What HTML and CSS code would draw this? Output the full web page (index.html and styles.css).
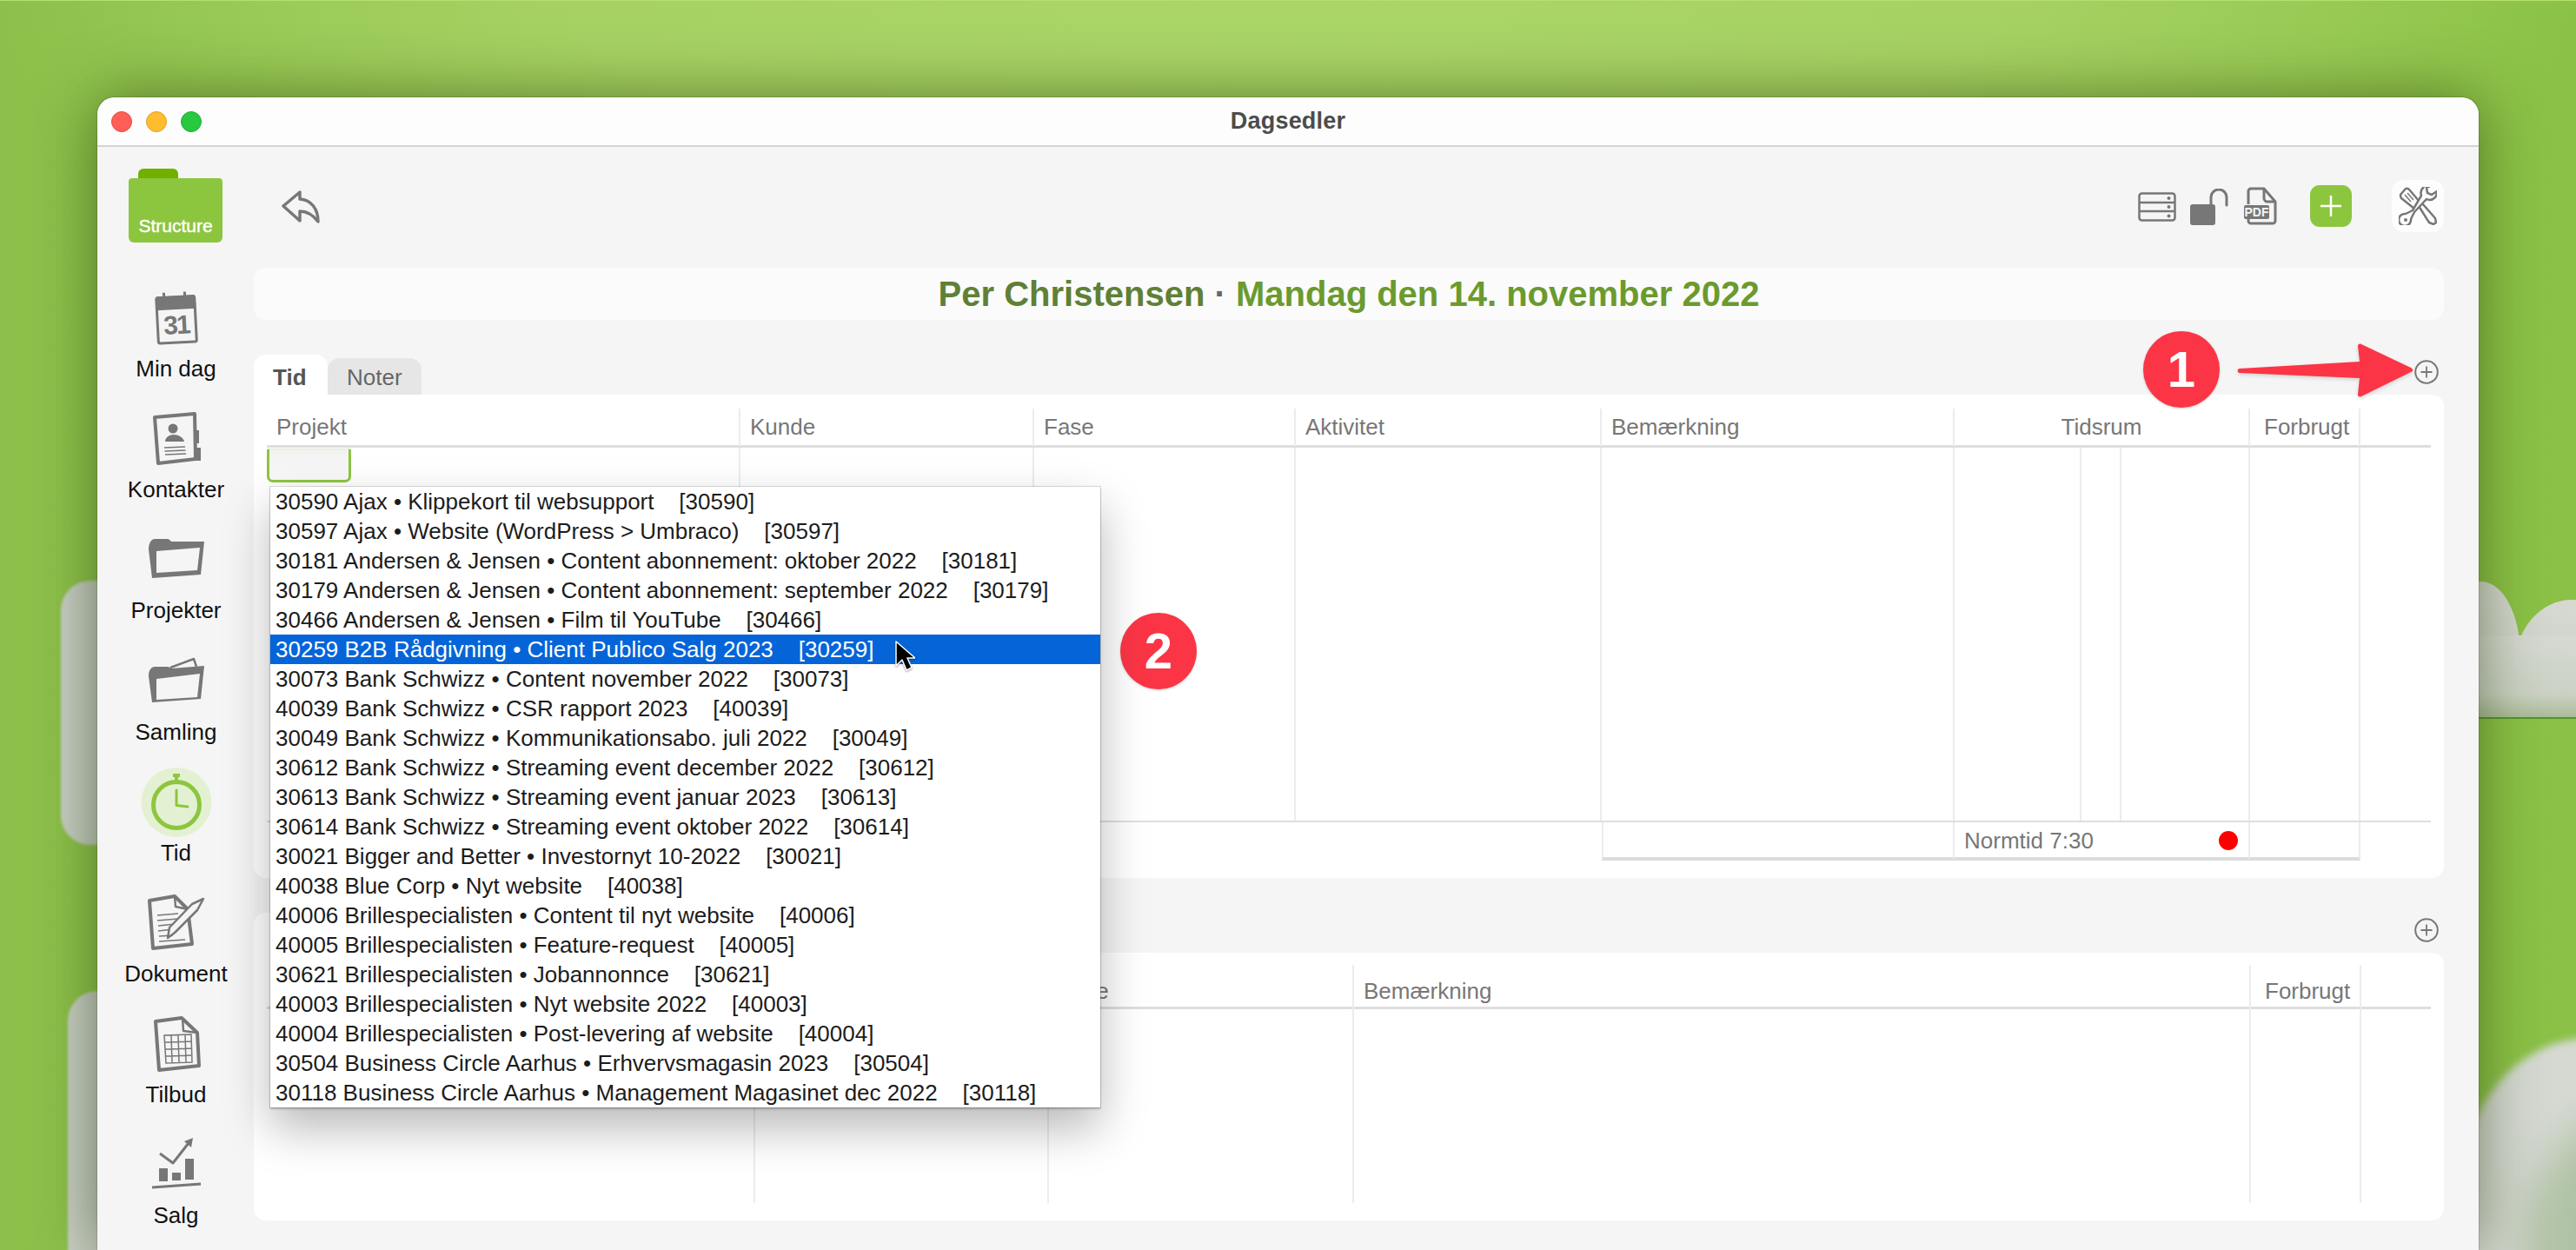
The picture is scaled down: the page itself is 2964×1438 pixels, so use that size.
FILE: index.html
```html
<!DOCTYPE html>
<html lang="da">
<head>
<meta charset="utf-8">
<title>Dagsedler</title>
<link rel="stylesheet" href="styles.css">
</head>
<body>
<div class="desktop">
  <div class="blob blob-l1"></div>
  <div class="blob blob-l2"></div>
  <div class="cloud-r1"><i></i><i></i><i></i></div>
  <div class="cloud-r2"><i></i></div>

  <div class="window">
    <header class="titlebar">
      <span class="light red"></span><span class="light amber"></span><span class="light green"></span>
      <span class="win-title">Dagsedler</span>
    </header>
    <div class="win-body">
      <nav class="sidebar">
        <div class="logo"><span>Structure</span></div>
        <div class="nav-list">
          <a class="nav-item">
            <svg class="nav-ic" viewBox="0 0 70 70"><g transform="rotate(-3 35 37)"><path class="ic-fill" d="M12 12a2 2 0 0 1 2-2h42a2 2 0 0 1 2 2v14H12z"/><rect class="ic-line-m" x="13" y="12" width="44" height="52" rx="2"/><path class="ic-ring" d="M22 6v11M46 6v11"/><text class="cal-num" x="34.500" y="54" text-anchor="middle">31</text></g></svg>
            <span>Min dag</span>
          </a>
          <a class="nav-item">
            <svg class="nav-ic" viewBox="0 0 70 70"><path class="ic-line" d="M10 11L56 7l1 52-43 5z"/><path class="ic-fill" d="M55 26h6v15h-6zM57 46h6v15h-6z"/><circle class="ic-fill" cx="31" cy="24" r="5.500"/><path class="ic-fill" d="M22 39c0-5 5-8 10-8s11 3 12 8z"/><path class="ic-thin" d="M21 46l24-1M21.500 50l24-1M22 54l24-1"/></svg>
            <span>Kontakter</span>
          </a>
          <a class="nav-item">
            <svg class="nav-ic" viewBox="0 0 70 70"><path class="ic-fill" d="M3 24c0-7 3-12 7-12h14c3 0 4 2 5 3l38 0-4 38-56 4z"/><path class="ic-paper" d="M12 26l50-4-3 26-47 3z"/></svg>
            <span>Projekter</span>
          </a>
          <a class="nav-item">
            <svg class="nav-ic" viewBox="0 0 70 70"><path class="ic-line-thin" d="M28 20l27-10 3 9"/><path class="ic-fill" d="M3 30c0-7 3-11 7-11h14c3 0 4 1 5 2l38-3-4 38-56 4z"/><path class="ic-paper" d="M12 33l50-6-3 27-47 3z"/></svg>
            <span>Samling</span>
          </a>
          <a class="nav-item">
            <svg class="nav-ic" viewBox="0 0 70 70"><ellipse class="clock-halo" cx="35" cy="36" rx="40.500" ry="40"/><circle class="clock" cx="35" cy="39" r="26.500"/><path class="clock-hand" d="M35 22v17.500l13 1.500"/><path class="clock-knob" d="M31 3h8v4h-2v5h-4V7h-2z"/></svg>
            <span>Tid</span>
          </a>
          <a class="nav-item">
            <svg class="nav-ic" viewBox="0 0 70 70"><path class="ic-line" d="M4 10l29-5 15 15 5 40-45 5z"/><path class="ic-line-thin" d="M33 5l1 12 14 3"/><path class="ic-thin" d="M13 27l24-2M13 33l24-2M14 39l20-2M14 45l18-2M15 51l16-1M15 57l30-2"/><path class="pencil" d="M33 47l26-26 7-13-13 6-26 27-2 12z"/><path class="ic-thin" d="M37 43l22-22"/></svg>
            <span>Dokument</span>
          </a>
          <a class="nav-item">
            <svg class="nav-ic" viewBox="0 0 70 70"><path class="ic-line" d="M11 10l30-4 18 17 2 38-46 5z"/><path class="ic-line-thin" d="M42 6l1 15 16 2"/><path class="ic-thin" d="M21 26l31-1 1 32-30 1zM21.500 34l31-1M22 42l31-1M22.500 50l31-1M29 26l1 32M37 26l1 32M45 25l1 32"/></svg>
            <span>Tilbud</span>
          </a>
          <a class="nav-item">
            <svg class="nav-ic" viewBox="0 0 70 70"><path class="ic-fill" d="M15 40h10v15H15zM30 45h10v9H30zM45 29h10v24H45z"/><path class="ic-line-m" d="M7 62l56-4"/><path class="ic-line-m" d="M16 23l15 11 18-23"/><path class="ic-fill" d="M44 9l10-4-2 11z"/></svg>
            <span>Salg</span>
          </a>
        </div>
      </nav>

      <main class="main">
        <div class="toolbar">
          <svg class="ic-back" viewBox="0 0 44 38"><path d="M2 18L21 2v8c13 1 21 11 21 26-6-8-12-12-21-12v11z"/></svg>
          <div class="tools">
            <svg class="ic-server" viewBox="0 0 44 34"><rect x="1.500" y="1.500" width="41" height="31" rx="3"/><path d="M2 12h40M2 22h40"/><circle cx="35.500" cy="7" r="2"/><circle cx="35.500" cy="17" r="2"/><circle cx="35.500" cy="27.500" r="2"/></svg>
            <svg class="ic-lock" viewBox="0 0 44 42"><rect x="0" y="18" width="29" height="24" rx="3"/><path d="M24 18V10a8.500 8.500 0 0 1 18 0v9"/></svg>
            <svg class="ic-pdf" viewBox="0 0 38 44"><path class="pdf-page" d="M5 20V5a3 3 0 0 1 3-3h15l13 15v22a3 3 0 0 1-3 3H8a3 3 0 0 1-3-3v-3"/><path class="pdf-page" d="M23 2v11a4 4 0 0 0 4 4h9"/><rect class="pdf-tag" x="0" y="21" width="29" height="16" rx="2"/><text class="pdf-txt" x="14.500" y="34" text-anchor="middle">PDF</text></svg>
            <button class="add-btn"><svg viewBox="0 0 24 24"><path d="M12 0v24M0 12h24"/></svg></button>
            <button class="tool-btn">
              <svg viewBox="0 0 44 44"><path class="tool-o" d="M2 9l6-7c2-1 3 0 4 1l12 14-2 6-4 2L3 13c-1-1-1-3-1-4z"/><path class="tool-o" d="M23 22l4-3 15 17 1 5-3 2-5-2z"/><path class="tool-o" d="M16 27l-8 4a7 7 0 1 0 6 6l4-8 14-15c4 2 7 1 10-2 2-2 2-5 2-7l-6 4-5-2-1-6 6-3c-4-1-8 0-10 3-3 3-3 6-2 9z"/><circle class="tool-d" cx="8" cy="38" r="2"/><path class="tool-t" d="M7 9l7 8M10 7l7 8"/></svg>
            </button>
          </div>
        </div>

        <h1 class="day-title"><span class="who">Per Christensen</span> <span class="dot">·</span> <span class="date">Mandag den 14. november 2022</span></h1>

        <section class="sec-1">
          <div class="tabs">
            <span class="tab active">Tid</span>
            <span class="tab">Noter</span>
            <svg class="plus" viewBox="0 0 28 28"><circle cx="14" cy="14" r="12.800"/><path d="M14 7.500v13M7.500 14h13"/></svg>
          </div>
          <div class="panel panel-1">
            <div class="row head g1">
              <div class="cell">Projekt</div><div class="cell">Kunde</div><div class="cell">Fase</div><div class="cell">Aktivitet</div><div class="cell">Bemærkning</div><div class="cell center">Tidsrum</div><div class="cell wide-pad">Forbrugt</div><div class="cell none"></div>
            </div>
            <div class="row body g1 b1">
              <div class="cell"><div class="field"></div></div><div class="cell"></div><div class="cell"></div><div class="cell"></div><div class="cell"></div>
              <div class="cell sub"><span></span><span></span><span></span></div>
              <div class="cell"></div><div class="cell none"></div>
            </div>
            <div class="row foot g1">
              <div class="blank"></div>
              <div class="cell ruled lined"></div>
              <div class="cell ruled normtid"><span>Normtid 7:30</span><i class="red-dot"></i></div>
              <div class="cell ruled"></div>
              <div class="cell none"></div>
            </div>

            <ul class="dropdown">
              <li>30590 Ajax • Klippekort til websupport    [30590]</li>
              <li>30597 Ajax • Website (WordPress &gt; Umbraco)    [30597]</li>
              <li>30181 Andersen &amp; Jensen • Content abonnement: oktober 2022    [30181]</li>
              <li>30179 Andersen &amp; Jensen • Content abonnement: september 2022    [30179]</li>
              <li>30466 Andersen &amp; Jensen • Film til YouTube    [30466]</li>
              <li class="sel">30259 B2B Rådgivning • Client Publico Salg 2023    [30259]</li>
              <li>30073 Bank Schwizz • Content november 2022    [30073]</li>
              <li>40039 Bank Schwizz • CSR rapport 2023    [40039]</li>
              <li>30049 Bank Schwizz • Kommunikationsabo. juli 2022    [30049]</li>
              <li>30612 Bank Schwizz • Streaming event december 2022    [30612]</li>
              <li>30613 Bank Schwizz • Streaming event januar 2023    [30613]</li>
              <li>30614 Bank Schwizz • Streaming event oktober 2022    [30614]</li>
              <li>30021 Bigger and Better • Investornyt 10-2022    [30021]</li>
              <li>40038 Blue Corp • Nyt website    [40038]</li>
              <li>40006 Brillespecialisten • Content til nyt website    [40006]</li>
              <li>40005 Brillespecialisten • Feature-request    [40005]</li>
              <li>30621 Brillespecialisten • Jobannonnce    [30621]</li>
              <li>40003 Brillespecialisten • Nyt website 2022    [40003]</li>
              <li>40004 Brillespecialisten • Post-levering af website    [40004]</li>
              <li>30504 Business Circle Aarhus • Erhvervsmagasin 2023    [30504]</li>
              <li>30118 Business Circle Aarhus • Management Magasinet dec 2022    [30118]</li>
            </ul>
          </div>
        </section>

        <section class="sec-2">
          <div class="tabs">
            <span class="tab active hidden-tab"></span>
            <svg class="plus" viewBox="0 0 28 28"><circle cx="14" cy="14" r="12.800"/><path d="M14 7.500v13M7.500 14h13"/></svg>
          </div>
          <div class="panel panel-2">
            <div class="row head g2">
              <div class="cell"></div><div class="cell"></div><div class="cell">Fase</div><div class="cell">Bemærkning</div><div class="cell wide-pad">Forbrugt</div><div class="cell none"></div>
            </div>
            <div class="row body g2 b2">
              <div class="cell"></div><div class="cell"></div><div class="cell"></div><div class="cell"></div><div class="cell"></div><div class="cell none"></div>
            </div>
          </div>
        </section>
      </main>
    </div>
  </div>

  <svg class="red-arrow" viewBox="0 0 204 64"><path d="M4 30L142 22 140 4c0-2 2-3 4-2l57 27c3 2 3 4 0 5l-57 28c-2 1-4 0-4-2l2-19L4 35c-3 0-3-5 0-5z"/></svg>
  <div class="badge badge-1">1</div>
  <div class="badge badge-2">2</div>
  <svg class="cursor" viewBox="0 0 24 38"><path d="M2 2v28l7-7 5 12 6-3-5-11h9z"/></svg>
</div>
</body>
</html>
```

FILE: styles.css
```css
* { box-sizing: border-box; }
html, body { margin: 0; padding: 0; }
body { font-family: "Liberation Sans", Arial, sans-serif; }

.desktop {
  position: relative;
  width: 2964px;
  height: 1438px;
  overflow: hidden;
  background:
    linear-gradient(#b5e06f, #b5e06f) top / 100% 1px no-repeat,
    radial-gradient(1500px 620px at 1480px -60px, #abd769 0%, #a6d263 55%, rgba(150,200,80,0) 100%),
    linear-gradient(90deg, #8cc04a 0%, #95ca51 30%, #93c94f 70%, #8bc146 100%);
}

/* blurred shapes of the wallpaper */
.blob {
  position: absolute;
  background: linear-gradient(90deg, #c9cfc6 0%, #bfc5bb 50%, #9ea69a 100%);
  border-radius: 34px;
  filter: blur(1.500px);
}
.blob-l1 { left: 70px; top: 668px; width: 120px; height: 304px; }
.blob-l2 { left: 78px; top: 1140px; width: 120px; height: 400px; }

.cloud-r1 {
  position: absolute;
  left: 2840px; top: 661px;
  width: 124px; height: 166px;
  overflow: hidden;
  border-bottom: 2px solid #53952b;
}
.cloud-r1 i {
  position: absolute;
  display: block;
  background: linear-gradient(180deg, #d6d9d2 0%, #cbd2c4 70%, #a9bb95 100%);
  border-radius: 50% 50% 0 0;
}
.cloud-r1 i:nth-child(1) { left: -30px; top: 8px; width: 90px; height: 170px; }
.cloud-r1 i:nth-child(2) { left: 54px; top: 29px; width: 130px; height: 150px; }
.cloud-r1 i:nth-child(3) { left: 0; top: 70px; width: 124px; height: 96px; border-radius: 0; }

.cloud-r2 {
  position: absolute;
  left: 2830px; top: 1194px;
  width: 300px; height: 360px;
  border-radius: 50%;
  background: #d5d9d2;
  filter: blur(5px);
  overflow: hidden;
}
.cloud-r2 i {
  position: absolute;
  display: block;
  left: 75px; top: 85px;
  width: 260px; height: 320px;
  border-radius: 50%;
  background: #b0c2a4;
  filter: blur(22px);
}

/* window */
.window {
  position: absolute;
  left: 112px; top: 112px;
  width: 2740px;
  height: 1326px;
  background: #f5f5f5;
  border-radius: 20px 20px 0 0;
  box-shadow: 0 0 70px rgba(35, 55, 5, .55), 0 0 2px rgba(40, 60, 10, .6);
  display: flex;
  flex-direction: column;
}
.titlebar {
  flex: none;
  position: relative;
  height: 57px;
  display: flex;
  align-items: center;
  gap: 16px;
  padding-left: 16px;
  background: #fdfdfd;
  border-bottom: 2px solid #d4d4d4;
  border-radius: 20px 20px 0 0;
}
.light { width: 24px; height: 24px; border-radius: 50%; }
.red { background: #ff5f57; border: 1px solid #e5493f; }
.amber { background: #febc2e; border: 1px solid #e0a12a; }
.green { background: #28c840; border: 1px solid #22ad36; }
.win-title {
  position: absolute;
  left: 0; right: 0;
  text-align: center;
  font-size: 27px;
  font-weight: 700;
  letter-spacing: .2px;
  color: #4c4c4c;
}
.win-body { flex: 1; display: flex; min-height: 0; }

/* sidebar */
.sidebar { flex: none; width: 180px; padding-top: 25px; }
.logo {
  position: relative;
  width: 108px; height: 74px;
  margin: 11px 0 0 36px;
  background: #8cc63f;
  border-radius: 0 0 6px 6px;
  border-top-left-radius: 4px;
  border-top-right-radius: 4px;
  display: flex;
  justify-content: center;
  align-items: flex-end;
  padding-bottom: 7px;
}
.logo::before {
  content: "";
  position: absolute;
  left: 11px; top: -11px;
  width: 46px; height: 11px;
  background: #72b000;
  border-radius: 6px 6px 0 0;
}
.logo span { color: #fff; font-size: 21px; line-height: 24px; -webkit-text-stroke: .4px #fff; }
.nav-list { margin-top: 51px; width: 181px; }
.nav-item {
  display: flex;
  flex-direction: column;
  align-items: center;
  height: 139.2px;
  font-size: 26px;
  line-height: 30px;
  color: #111;
}
.nav-ic { width: 70px; height: 70px; flex: none; overflow: visible; margin-bottom: 9px; }
.ic-fill { fill: #777; }
.ic-line { fill: none; stroke: #777; stroke-width: 4; stroke-linejoin: round; }
.ic-line-m { fill: none; stroke: #777; stroke-width: 3; stroke-linejoin: round; }
.ic-line-thin { fill: none; stroke: #777; stroke-width: 2.500; stroke-linejoin: round; }
.ic-thin { fill: none; stroke: #777; stroke-width: 1.500; }
.ic-ring { fill: none; stroke: #777; stroke-width: 3; }
.ic-paper { fill: #f5f5f5; }
.cal-num { fill: #777; font-size: 30px; font-weight: 700; font-family: "Liberation Sans", sans-serif; letter-spacing: -2px; }
.clock-halo { fill: #e3f1d2; }
.clock { fill: none; stroke: #8cc63f; stroke-width: 5; }
.clock-hand { fill: none; stroke: #8cc63f; stroke-width: 3; stroke-linecap: round; stroke-linejoin: round; }
.clock-knob { fill: #8cc63f; }
.pencil { fill: #f5f5f5; stroke: #777; stroke-width: 2.500; stroke-linejoin: round; }

/* main column */
.main { flex: 1; min-width: 0; padding-right: 40px; display: flex; flex-direction: column; }
.toolbar {
  flex: none;
  height: 139px;
  display: flex;
  align-items: flex-start;
  justify-content: space-between;
  padding-left: 32px;
}
.ic-back { width: 44px; height: 38px; margin-top: 50px; fill: none; stroke: #777; stroke-width: 3.500; stroke-linejoin: round; }
.tools { display: flex; align-items: flex-start; padding-top: 39px; }
.ic-server { width: 44px; height: 34px; margin-top: 13px; fill: none; stroke: #777; stroke-width: 2.500; }
.ic-server circle { fill: #777; stroke: none; }
.ic-lock { width: 44px; height: 42px; margin: 9px 0 0 16px; }
.ic-lock rect { fill: #777; }
.ic-lock path { fill: none; stroke: #777; stroke-width: 3; stroke-linecap: round; }
.ic-pdf { width: 38px; height: 44px; margin: 7px 0 0 18px; }
.pdf-page { fill: none; stroke: #777; stroke-width: 3; stroke-linejoin: round; }
.pdf-tag { fill: #777; }
.pdf-txt { fill: #f5f5f5; font-size: 14px; font-weight: 700; font-family: "Liberation Sans", sans-serif; }
.add-btn {
  width: 48px; height: 48px;
  margin: 5px 0 0 38px;
  padding: 12px;
  border: 0;
  border-radius: 11px;
  background: #8cc63f;
}
.add-btn svg { display: block; width: 24px; height: 24px; fill: none; stroke: #fdfdf5; stroke-width: 2.500; }
.tool-btn {
  width: 60px; height: 60px;
  margin: -1px 0 0 46px;
  padding: 8px;
  border: 0;
  border-radius: 14px;
  background: #fdfdfd;
}
.tool-btn svg { display: block; width: 44px; height: 44px; }
.tool-o { fill: #fdfdfd; stroke: #777; stroke-width: 2.500; stroke-linejoin: round; }
.tool-d { fill: #777; }
.tool-t { fill: none; stroke: #777; stroke-width: 1.500; }

.day-title {
  flex: none;
  margin: 0 0 40px;
  height: 60px;
  line-height: 60px;
  text-align: center;
  font-size: 40px;
  font-weight: 700;
  background: #fbfbfb;
  border-radius: 14px;
}
.who { color: #5f8035; }
.dot { color: #666; }
.date { color: #6b9a2e; }

/* tabbed sections */
.tabs { position: relative; height: 46px; display: flex; align-items: flex-end; }
.tab {
  height: 42px;
  line-height: 44px;
  padding: 0 22px;
  font-size: 26px;
  color: #666;
  background: #e6e6e6;
  border-radius: 14px 14px 0 0;
}
.tab.active { height: 46px; line-height: 52px; width: 85px; color: #555; font-weight: 700; background: #fff; }
.hidden-tab.active { width: 300px; }
.plus {
  position: absolute;
  right: 6px; top: 6px;
  width: 28px; height: 28px;
  fill: none; stroke: #777;
}
.plus circle { stroke-width: 2; }
.plus path { stroke-width: 1.800; }

.panel {
  position: relative;
  background: #fff;
  padding: 16px 15px 0;
  border-radius: 0 14px 14px 14px;
}
.panel-1 { height: 556px; }
.sec-2 { margin-top: 40px; }
.panel-2 { height: 308px; padding-top: 14px; }

.row { display: grid; }
.g1 { grid-template-columns: 545px 338px 301px 352px 406px 340px 127px 81px; }
.g2 { grid-template-columns: 562px 338px 351px 1032px 127px 80px; }
.cell {
  font-size: 26px;
  color: #777;
  padding-left: 11px;
  border-right: 2px solid #ececec;
}
.cell.none { border-right: 0; }
.head { height: 45px; border-bottom: 3px solid #dedede; }
.head .cell { line-height: 43px; }
.head .cell.wide-pad { padding-left: 16px; }
.head .cell.center { text-align: center; padding: 0; }
.panel-2 .head { height: 51px; }
.panel-2 .head .cell { line-height: 61px; }
.b1 { height: 429px; }
.b2 { height: 223px; }
.body .cell { padding: 0; }
.field {
  width: 97px; height: 39px;
  margin-top: 1px;
  border: 3px solid #8cc63f;
  border-top: 1px solid #dfe8d2;
  border-radius: 3px 3px 7px 7px;
  background: linear-gradient(180deg, #f2f2f2, #f9f9f9);
}
.sub { display: grid; grid-template-columns: 146px 46px 1fr; }
.sub span { border-right: 2px solid #ececec; }
.sub span:last-child { border-right: 0; }
.foot { height: 46px; border-top: 2px solid #dedede; }
.blank { grid-column: 1 / span 4; }
.lined { border-left: 2px solid #ececec; }
.ruled { border-bottom: 4px solid #dcdcdc; }
.normtid {
  display: flex;
  justify-content: space-between;
  align-items: center;
  padding: 2px 12px 0 11px;
  font-size: 26px;
}
.red-dot { width: 22px; height: 22px; border-radius: 50%; background: #f00; }

/* project popup */
.dropdown {
  position: absolute;
  left: 19px; top: 106px;
  z-index: 5;
  width: 955px;
  margin: 0;
  padding: 0;
  list-style: none;
  background: #fff;
  box-shadow: 0 0 0 1px rgba(0,0,0,.14), 0 2px 2px rgba(0,0,0,.2), 0 24px 50px rgba(0,0,0,.28);
}
.dropdown li {
  height: 34px;
  line-height: 34px;
  padding-left: 6px;
  font-size: 26px;
  color: #1c1c1c;
  white-space: pre;
  overflow: hidden;
}
.dropdown li.sel { background: #0565d8; color: #fff; }

/* annotations */
.red-arrow { position: absolute; left: 2573px; top: 394px; width: 204px; height: 64px; fill: #fb3546; filter: drop-shadow(0 2px 2px rgba(0,0,0,.15)); }
.badge {
  position: absolute;
  width: 88px; height: 88px;
  border-radius: 50%;
  background: #fb3546;
  color: #fff;
  font-size: 58px;
  font-weight: 700;
  line-height: 88px;
  text-align: center;
  box-shadow: 0 1px 3px rgba(0,0,0,.2);
}
.badge-1 { left: 2466px; top: 381px; }
.badge-2 { left: 1289px; top: 705px; }
.cursor { position: absolute; z-index: 10; left: 1029px; top: 736px; width: 24px; height: 38px; fill: #000; stroke: #fff; stroke-width: 1.500; stroke-linejoin: round; filter: drop-shadow(0 1px 1px rgba(0,0,0,.4)); }
```
